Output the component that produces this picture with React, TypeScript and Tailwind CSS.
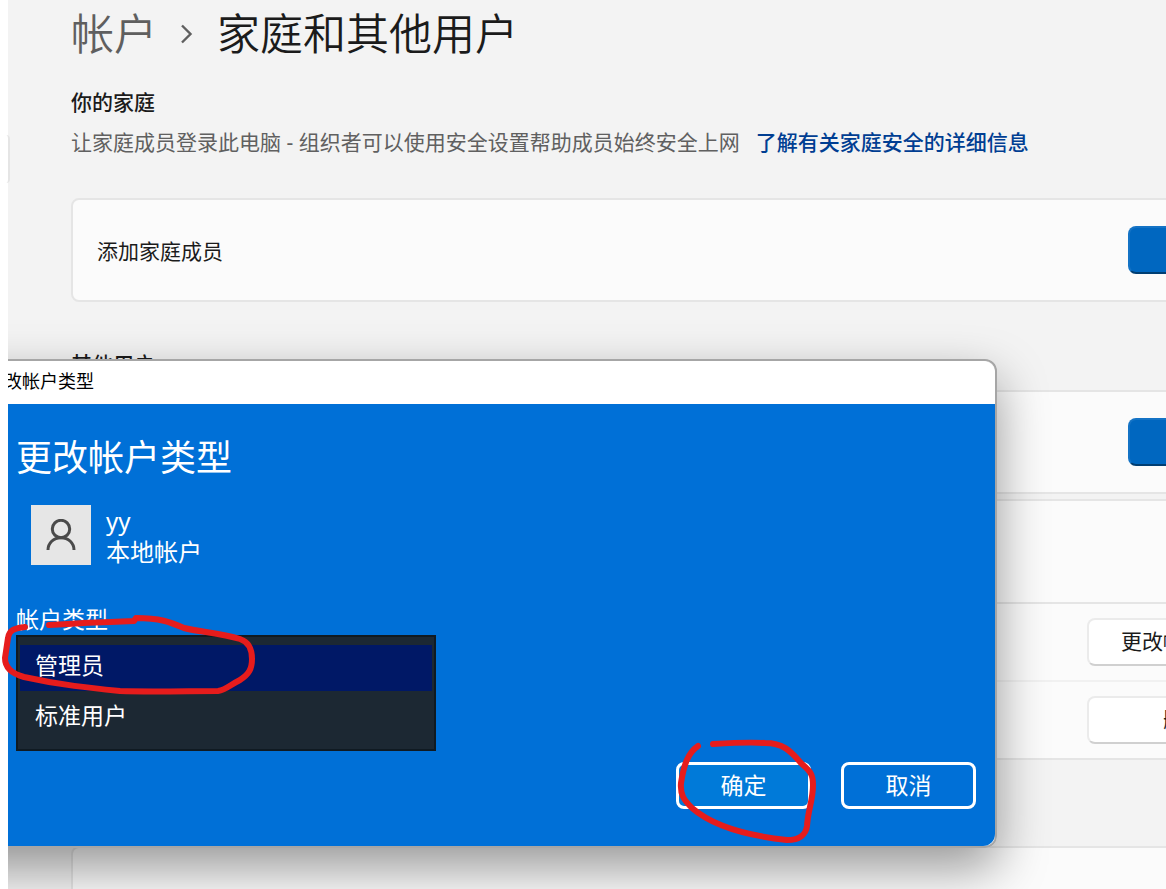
import type { ReactNode } from "react";

function Card({ children, className = "" }: { children?: ReactNode; className?: string }) {
  return <div className={`rounded-lg border-2 border-[#e5e5e5] bg-[#fbfbfb] ${className}`}>{children}</div>;
}

function AccentButton({ label }: { label: string }) {
  return (
    <button
      aria-label={label}
      className="h-12 w-[153px] rounded-lg border-2 border-[#1473c5] border-b-[#003e73] bg-[#0067c0]"
    />
  );
}

function PlainButton({ children }: { children: ReactNode }) {
  return (
    <button className="h-12 w-[194px] rounded-lg border-2 border-[#ebebeb] border-b-[#d0d0d0] bg-white text-[21px]">
      {children}
    </button>
  );
}

function Settings() {
  return (
    <section className="-mr-[141px] flex-1 pt-1 pl-[63px]">
      <h1 className="flex items-center gap-[18px] text-[43px] leading-[60px] font-[350]">
        <a href="#accounts" className="text-[#5f5f5f]">帐户</a>
        <svg width="24" height="24" viewBox="0 0 24 24" fill="none" stroke="#5f5f5f" strokeWidth="2.4" aria-hidden="true">
          <path d="M7 3.5 15.5 12 7 20.5" />
        </svg>
        <span>家庭和其他用户</span>
      </h1>

      <h2 className="mt-[22px] text-[21px] leading-8 font-medium">你的家庭</h2>
      <p className="mt-1 flex gap-4 text-[21px] leading-10 whitespace-nowrap text-[#606060]">
        <span>让家庭成员登录此电脑 - 组织者可以使用安全设置帮助成员始终安全上网</span>
        <a href="#family-safety" className="font-medium text-[#003e92]">了解有关家庭安全的详细信息</a>
      </p>

      <Card className="mt-9 flex h-[104px] items-center justify-between px-6">
        <span className="pt-1 text-[21px]">添加家庭成员</span>
        <AccentButton label="添加帐户" />
      </Card>

      <h2 className="mt-[46px] mb-[10px] text-[21px] leading-8 font-medium">其他用户</h2>
      <Card className="flex h-[104px] items-center justify-end px-6">
        <AccentButton label="添加其他用户" />
      </Card>

      <Card className="mt-[5px]">
        <div className="h-[101px]" />
        <div className="flex h-[78px] items-center justify-end border-t-2 border-[#e5e5e5] px-6">
          <PlainButton>更改帐户类型</PlainButton>
        </div>
        <div className="flex h-[78px] items-center justify-end border-t-2 border-[#f1f1f1] px-6">
          <PlainButton>删除</PlainButton>
        </div>
      </Card>

      <Card className="mt-[86px] h-[104px]" />
    </section>
  );
}

function AccountTypeDialog() {
  return (
    <div
      role="dialog"
      aria-label="更改帐户类型"
      className="absolute top-[359px] right-[169px] -left-20 rounded-xl border-2 border-[#a6a6a6] shadow-[0_20px_50px_rgba(0,0,0,0.4)]"
    >
      <div className="h-[43px] rounded-t-xl bg-white pl-[82px] text-lg leading-[41px] text-black">改帐户类型</div>
      <div className="rounded-b-xl bg-[#0070d7] pt-[26px] pr-[19px] pb-[37px] pl-[94px] text-[23px] text-white">
        <h2 className="text-4xl leading-[56px]">更改帐户类型</h2>

        <div className="mt-[19px] ml-[15px] flex gap-[15px]">
          <div className="flex size-[60px] items-center justify-center bg-[#e6e6e6]">
            <svg width="30" height="32" viewBox="0 0 30 32" fill="none" stroke="#4a4a4a" strokeWidth="3" aria-hidden="true">
              <circle cx="15" cy="10" r="8.7" />
              <path d="M2 31c0-7 5.500-12.300 13-12.300S28 24 28 31" />
            </svg>
          </div>
          <div className="text-2xl leading-[31px]">
            <p>yy</p>
            <p>本地帐户</p>
          </div>
        </div>

        <div className="relative mt-9">
          <label htmlFor="account-type" className="block leading-8">帐户类型</label>
          <select
            id="account-type"
            size={2}
            defaultValue="admin"
            className="block h-[116px] w-[420px] appearance-none overflow-hidden border-2 border-[#101a22] bg-[#1c2833] px-[2px] py-2 text-[23px] text-white outline-none"
          >
            <option value="admin" className="h-[46px] px-[15px] pt-[2px] text-white checked:bg-[#001866] checked:bg-[linear-gradient(#001866,#001866)]">
              管理员
            </option>
            <option value="standard" className="h-[50px] px-[15px] pt-[6px] text-white">标准用户</option>
          </select>
          <svg
            className="pointer-events-none absolute top-0 -left-4 z-20"
            width="270"
            height="100"
            viewBox="0 603 270 100"
            fill="none"
            stroke="#e61c1c"
            strokeWidth="6"
            strokeLinecap="round"
            strokeLinejoin="round"
            aria-hidden="true"
          >
            <path d="M25 627C15 628 9 630 8 638L5 658C5 669 13 674 24 677C60 685 90 688 120 691C150 692 190 691 218 691C226 690 230 685 240 680C249 674 252 669 252 659C252 649 249 642 240 639C220 633 200 632 184 628C170 622 160 618 136 618L134 621C105 622 80 623 49 625" />
          </svg>
        </div>

        <div className="mt-[11px] flex justify-end gap-[30px]">
          <div className="relative">
            <button className="block h-[47px] w-[135px] rounded-lg border-3 border-white bg-[#007ad9]">确定</button>
            <svg
              className="pointer-events-none absolute -top-[27px] -left-[6px] z-20"
              width="150"
              height="115"
              viewBox="670 735 150 115"
              fill="none"
              stroke="#e61c1c"
              strokeWidth="6"
              strokeLinecap="round"
              strokeLinejoin="round"
              aria-hidden="true"
            >
              <path d="M698 746C688 753 684 764 681 783C680 795 684 800 692 808C715 828 750 836 787 840C800 840 806 834 807 826C808 810 813 800 813 785C813 774 810 771 802 764C792 753 785 743 765 743C750 742 730 743 713 744" />
            </svg>
          </div>
          <button className="h-[47px] w-[135px] rounded-lg border-3 border-white">取消</button>
        </div>
      </div>
    </div>
  );
}

export default function App() {
  return (
    <main className="relative flex h-screen overflow-hidden bg-[#f3f3f3] font-['Noto_Sans','Noto_Sans_CJK_SC',sans-serif] text-[#1b1b1b]">
      <div className="relative z-10 w-2 shrink-0 bg-white pt-[135px]">
        {/* right end of the sidebar search box */}
        <div className="h-12 w-[10px] rounded-r-sm border-r-2 border-[#e5e5e5] bg-white" />
      </div>
      <Settings />
      <AccountTypeDialog />
    </main>
  );
}
